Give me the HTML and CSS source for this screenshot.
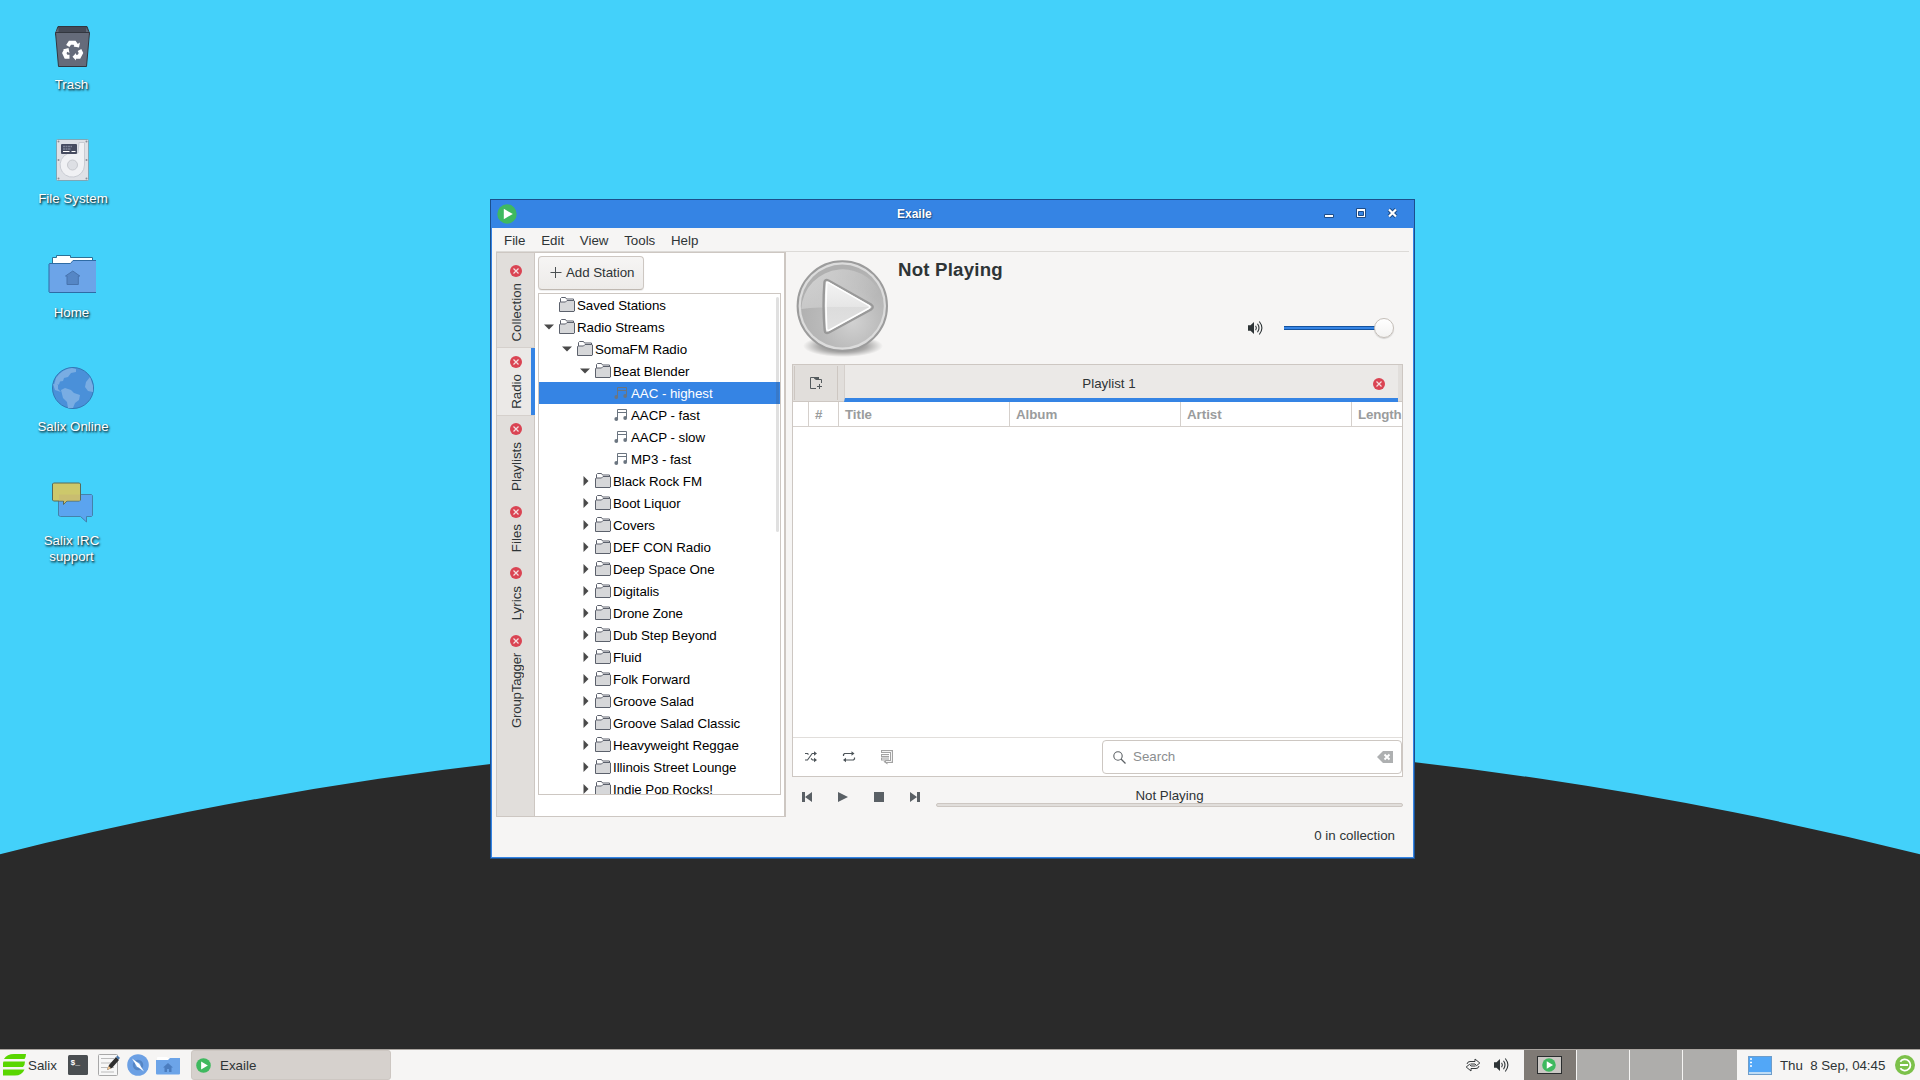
FILE: index.html
```html
<!DOCTYPE html>
<html lang="en">
<head>
<meta charset="utf-8">
<title>Exaile</title>
<link rel="stylesheet" href="styles.css">
</head>
<body>
<svg class="defs" width="0" height="0" aria-hidden="true">
  <symbol id="folder" viewBox="0 0 16 16">
    <path d="M1.500 5.500V1.500l1-1h4l1 1.500h7v4" fill="#fff" stroke="#5c616c"/>
    <path d="M.5 14.500V5.500l.5-.5h5.500l1.500-1.500h7l.5.5v10l-.5.5z" fill="#d6d7d9" stroke="#5c616c"/>
  </symbol>
  <symbol id="note" viewBox="0 0 14 14">
    <path d="M3.500 11V1.500h9V10M3.500 4.500h9" fill="none" stroke="currentColor" stroke-width="1"/>
    <circle cx="2.300" cy="11" r="1.900" fill="currentColor"/><circle cx="11.200" cy="10" r="1.900" fill="currentColor"/>
  </symbol>
  <symbol id="close" viewBox="0 0 12 12">
    <circle cx="6" cy="6" r="6" fill="#da4453"/><path d="M3.500 3.500l5 5M8.500 3.500l-5 5" stroke="#f4dfe1" stroke-width="1.200"/>
  </symbol>
  <symbol id="down" viewBox="0 0 10 6"><path d="M0 .5h10L5 5.500z" fill="#4a4a4a"/></symbol>
  <symbol id="right" viewBox="0 0 6 10"><path d="M.5 0v10L5.500 5z" fill="#4a4a4a"/></symbol>
  <symbol id="exaile" viewBox="0 0 20 20"><circle cx="10" cy="10" r="9.700" fill="#3fb95f"/><path d="M6.800 4.800v10.400L15.800 10z" fill="#fff"/></symbol>
  <symbol id="speaker" viewBox="0 0 16 16">
    <path d="M1 5.200h2.500L7 2v12l-3.500-3.200H1z" fill="#2e3436"/>
    <path d="M8.600 5.700q1.600 2.300 0 4.600M10.500 3.800q3 4.200 0 8.400" fill="none" stroke="#2e3436" stroke-width="1.100"/><path d="M12.300 1.500q5.200 6.500 0 13" fill="none" stroke="#2e3436" stroke-width="1.100" class="wave"/>
  </symbol>
</svg>

<main class="desktop">
  <svg class="wallpaper" viewBox="0 0 1920 1080"><circle cx="960" cy="4696" r="3960" fill="#2a2a2a"/></svg>

  <div class="launcher trash">
    <svg width="48" height="48" viewBox="0 0 48 48">
      <path d="M8 8l2-5.500h29L41 8v3H7.500z" fill="#454a56" stroke="#32363f"/>
      <path d="M7.500 8.500l3-5V8.500zM41 8.500l-3-5v5z" fill="#626876"/>
      <path d="M7.500 8.500h34l-3 34h-28z" fill="#656b7a" stroke="#32363f"/>
      <g fill="none" stroke="#fff" stroke-width="4"><path d="M19.800 22l2.200-3.300h4.500l2 3M31.500 26l1.500 3-2 3.700H27M21.500 32.700h-3.500L16.300 29l1.700-3"/></g>
      <path d="M25.500 22.500l5.500 1 1-5zM28 29v7.500L24.500 32.700zM15 25.500l5.500-1.500 1 5z" fill="#fff"/>
    </svg><span>Trash</span></div>
  <div class="launcher fs">
    <svg width="48" height="48" viewBox="0 0 48 48">
      <rect x="8.500" y="2.500" width="32" height="41" rx="1" fill="#dfe1e6" stroke="#7fa6b5"/>
      <path d="M31 5.500h5.500v22.500a12.200 12.200 0 1 1-17-11.300L30 16z" fill="#f0f1f4" stroke="#c9ccd3"/>
      <circle cx="24.500" cy="28" r="5" fill="#dddfe4" stroke="#c6c8ce"/>
      <rect x="13" y="7" width="16" height="10" rx="1" fill="#474c60"/>
      <path d="M15 9.500h9M15 12h8" stroke="#7f8496" stroke-width="1.500" stroke-dasharray="2 .5"/><path d="M15 14.500h6.500M23.500 14.500h4" stroke="#fff"/>
      <g fill="#8a8d97"><circle cx="10.500" cy="4.500" r="1"/><circle cx="38.500" cy="4.500" r="1"/><circle cx="10.500" cy="23" r="1"/><circle cx="38.500" cy="23" r="1"/><circle cx="10.500" cy="41.500" r="1"/><circle cx="38.500" cy="41.500" r="1"/></g>
    </svg><span>File System</span></div>
  <div class="launcher home">
    <svg width="48" height="48" viewBox="0 0 48 48">
      <path d="M4.500 13V4.500h4v-2h14v2h22V13z" fill="#fff" stroke="#2c7196"/>
      <path d="M1 11l.5-.5h21l2.500-3h23l.5.5v31l-.5.5H1.500L1 39z" fill="#6ca4e8" stroke="#2e6ba5"/>
      <path d="M24.800 18l7 5h-1.500v8.500H19V23h-1.500z" fill="#5586c5" stroke="#4773ad"/>
    </svg><span>Home</span></div>
  <div class="launcher online">
    <svg width="48" height="48" viewBox="0 0 48 48">
      <circle cx="25" cy="23" r="20.500" fill="#4a90d9" stroke="#3476b4"/>
      <g fill="#79ade3"><path d="M8 13Q14 4 24 3l4 1v3l-5 1-3 4-4 1-1 3-3 .5-1 3-5 .5zM5 19l5 1v4l3 3-6-2zM13 25l4-2 6 2 3 3 6 2-1 5-4 3-2 5h-5l-1-6-4-4zM38 17l4-5 3 9v6l-5-1-3-4z"/></g>
    </svg><span>Salix Online</span></div>
  <div class="launcher irc">
    <svg width="48" height="48" viewBox="0 0 48 48">
      <path d="M11.500 14.500h32l1 1v20l-1 1H38.500v5.500l-6-5.500h-20l-2-1v-20z" fill="#5ba4ef" stroke="#4382aa"/>
      <path d="M5.500 3h26l1 1v16l-1 1H19l-3.500 3.500V21H5.500l-1-1V4z" fill="#cdc86b" stroke="#5a6a58"/>
      <path d="M11 14.500h21v6h-13l-3 3v-3h-5z" fill="#c9bd70"/>
    </svg><span>Salix IRC<br>support</span></div>

  <section class="window">
    <header class="titlebar">
      <svg class="app" width="20" height="20"><use href="#exaile"/></svg>
      <b>Exaile</b>
      <svg class="wm" width="76" height="12" viewBox="0 0 76 12">
        <path d="M.5 6.500h9v3h-9z" fill="#fff" stroke="#1d4d89"/>
        <path d="M32.500.5h9v9h-9z" fill="#fff" stroke="#1d4d89"/><path d="M34.500 3.500h5v4h-5z" fill="#3584e4" stroke="#1d4d89"/>
        <path d="M65 1.500l7 7M72 1.500l-7 7" stroke="#1d4d89" stroke-width="4.200"/><path d="M65 1.500l7 7M72 1.500l-7 7" stroke="#fff" stroke-width="2.200"/>
      </svg>
    </header>
    <nav class="menubar"><span>File</span><span>Edit</span><span>View</span><span>Tools</span><span>Help</span></nav>

    <div class="columns">
      <aside class="panels">
        <ul class="sidetabs">
          <li class="t1"><svg width="12" height="12"><use href="#close"/></svg><span>Collection</span></li>
          <li class="t2 active"><svg width="12" height="12"><use href="#close"/></svg><span>Radio</span></li>
          <li class="t3"><svg width="12" height="12"><use href="#close"/></svg><span>Playlists</span></li>
          <li class="t4"><svg width="12" height="12"><use href="#close"/></svg><span>Files</span></li>
          <li class="t5"><svg width="12" height="12"><use href="#close"/></svg><span>Lyrics</span></li>
          <li class="t6"><svg width="12" height="12"><use href="#close"/></svg><span>GroupTagger</span></li>
        </ul>
        <div class="radio">
          <button class="add"><svg width="12" height="12" viewBox="0 0 12 12"><path d="M.5 5.500h11M5.500 0v11" stroke="#4b5052"/></svg>Add Station</button>
          <div class="tree">
            <div class="row l1"><i></i><svg class="f"><use href="#folder"/></svg>Saved Stations</div>
            <div class="row l1"><i><svg width="10" height="6"><use href="#down"/></svg></i><svg class="f"><use href="#folder"/></svg>Radio Streams</div>
            <div class="row l2"><i><svg width="10" height="6"><use href="#down"/></svg></i><svg class="f"><use href="#folder"/></svg>SomaFM Radio</div>
            <div class="row l3"><i><svg width="10" height="6"><use href="#down"/></svg></i><svg class="f"><use href="#folder"/></svg>Beat Blender</div>
            <div class="row l4 selected"><i></i><svg class="n"><use href="#note"/></svg>AAC - highest</div>
            <div class="row l4"><i></i><svg class="n"><use href="#note"/></svg>AACP - fast</div>
            <div class="row l4"><i></i><svg class="n"><use href="#note"/></svg>AACP - slow</div>
            <div class="row l4"><i></i><svg class="n"><use href="#note"/></svg>MP3 - fast</div>
            <div class="row l3"><i><svg width="6" height="10"><use href="#right"/></svg></i><svg class="f"><use href="#folder"/></svg>Black Rock FM</div>
            <div class="row l3"><i><svg width="6" height="10"><use href="#right"/></svg></i><svg class="f"><use href="#folder"/></svg>Boot Liquor</div>
            <div class="row l3"><i><svg width="6" height="10"><use href="#right"/></svg></i><svg class="f"><use href="#folder"/></svg>Covers</div>
            <div class="row l3"><i><svg width="6" height="10"><use href="#right"/></svg></i><svg class="f"><use href="#folder"/></svg>DEF CON Radio</div>
            <div class="row l3"><i><svg width="6" height="10"><use href="#right"/></svg></i><svg class="f"><use href="#folder"/></svg>Deep Space One</div>
            <div class="row l3"><i><svg width="6" height="10"><use href="#right"/></svg></i><svg class="f"><use href="#folder"/></svg>Digitalis</div>
            <div class="row l3"><i><svg width="6" height="10"><use href="#right"/></svg></i><svg class="f"><use href="#folder"/></svg>Drone Zone</div>
            <div class="row l3"><i><svg width="6" height="10"><use href="#right"/></svg></i><svg class="f"><use href="#folder"/></svg>Dub Step Beyond</div>
            <div class="row l3"><i><svg width="6" height="10"><use href="#right"/></svg></i><svg class="f"><use href="#folder"/></svg>Fluid</div>
            <div class="row l3"><i><svg width="6" height="10"><use href="#right"/></svg></i><svg class="f"><use href="#folder"/></svg>Folk Forward</div>
            <div class="row l3"><i><svg width="6" height="10"><use href="#right"/></svg></i><svg class="f"><use href="#folder"/></svg>Groove Salad</div>
            <div class="row l3"><i><svg width="6" height="10"><use href="#right"/></svg></i><svg class="f"><use href="#folder"/></svg>Groove Salad Classic</div>
            <div class="row l3"><i><svg width="6" height="10"><use href="#right"/></svg></i><svg class="f"><use href="#folder"/></svg>Heavyweight Reggae</div>
            <div class="row l3"><i><svg width="6" height="10"><use href="#right"/></svg></i><svg class="f"><use href="#folder"/></svg>Illinois Street Lounge</div>
            <div class="row l3"><i><svg width="6" height="10"><use href="#right"/></svg></i><svg class="f"><use href="#folder"/></svg>Indie Pop Rocks!</div>
            <div class="scrollbar"></div>
          </div>
        </div>
      </aside>

      <div class="player">
        <div class="info">
          <svg class="cover" width="96" height="100" viewBox="0 0 96 100">
            <defs>
              <radialGradient id="disc" cx=".62" cy=".68" r=".65"><stop offset="0" stop-color="#d2d2d2"/><stop offset=".6" stop-color="#b9b9b9"/><stop offset="1" stop-color="#b0b0b0"/></radialGradient>
              <linearGradient id="gloss" x1="0" y1="0" x2="1" y2=".5"><stop offset="0" stop-color="#fff" stop-opacity=".5"/><stop offset="1" stop-color="#fff" stop-opacity="0"/></linearGradient>
              <radialGradient id="shade"><stop offset="0" stop-color="#000" stop-opacity=".55"/><stop offset=".6" stop-color="#000" stop-opacity=".3"/><stop offset="1" stop-color="#000" stop-opacity="0"/></radialGradient>
              <linearGradient id="tri" x1="0" y1="0" x2="0" y2="1"><stop offset="0" stop-color="#f4f4f4"/><stop offset=".5" stop-color="#e6e6e6"/><stop offset=".52" stop-color="#dcdcdc"/><stop offset="1" stop-color="#e2e2e2"/></linearGradient>
            </defs>
            <ellipse cx="49" cy="86" rx="40" ry="11" fill="url(#shade)"/>
            <circle cx="48.300" cy="46" r="44.700" fill="#dcdcdc" stroke="#9c9c9c" stroke-width="2"/>
            <circle cx="48.300" cy="46" r="41.500" fill="url(#disc)"/>
            <path d="M7.300 49a41.500 41.500 0 0 1 82-7Q68 50 40 48 20 46.500 7.300 49z" fill="url(#gloss)"/>
            <path d="M30.500 22Q31 19 34.500 20.500L77 44.500q3.500 2.500 0 5L35 72.500q-4 1.500-4.300-2Q28.500 46 30.500 22z" fill="url(#tri)" stroke="#999" stroke-width="2.400"/>
            <path d="M32.700 24q0-2.500 2.500-1.200L74.500 45.300q2.400 1.600 0 3.200L35.500 70q-2.600 1-2.800-1.500-1.400-22 0-44.500z" fill="none" stroke="#fff" stroke-width="1.500"/>
          </svg>
          <h1>Not Playing</h1>
          <div class="volume">
            <svg width="16" height="16" viewBox="0 0 16 16"><use href="#speaker"/></svg>
            <div class="slider"><span></span></div>
          </div>
        </div>

        <div class="playlist">
          <div class="tabs">
            <div class="newtab"><svg width="14" height="14" viewBox="0 0 14 14"><path d="M7 12.500H1.500V1.500H5M12.500 7V3.500H10" fill="none" stroke="#555b5e"/><path d="M5 1h5v3H7L5 2.500z" fill="#555b5e"/><path d="M10.500 8v5M8 10.500h5" stroke="#555b5e"/></svg></div>
            <div class="tab"><span>Playlist 1</span><svg width="12" height="12"><use href="#close"/></svg></div>
          </div>
          <div class="thead"><span></span><span>#</span><span>Title</span><span>Album</span><span>Artist</span><span>Length</span></div>
          <div class="empty"></div>
          <div class="tools">
            <svg width="14" height="12" viewBox="0 0 14 12"><g fill="none" stroke="#4d5459" stroke-width="1.100"><path d="M1 2.500h2.500L4.500 3.500M7 7.500l1.500 1.500h3M1 9h2.500l4.700-6.500h3"/></g><path d="M10 .3l3 2.200-3 2.200zM10 6.800l3 2.200-3 2.200z" fill="#4d5459"/></svg>
            <svg width="14" height="12" viewBox="0 0 14 12"><path d="M1.500 5V3.500L2.500 2.500h8M12.500 6.500V8l-1 1h-8" fill="none" stroke="#4d5459" stroke-width="1.200"/><path d="M9.500.2l3 2.300-3 2.300zM4 6.700L1 9l3 2.300z" fill="#4d5459"/></svg>
            <svg class="dyn" width="14" height="16" viewBox="0 0 14 16"><g fill="none"><path d="M1 2.500h10.500v10H6M1 6.500h8M1 10h8" stroke="#a3a3a3" stroke-width="3"/><path d="M7.500 9.800L3.500 12.700l4 2.800z" fill="#a3a3a3"/><path d="M2 2.500h9.500v10H6M2 6.500h7M2 10h7" stroke="#f3f3f3"/></g></svg>
            <div class="search">
              <svg width="13" height="13" viewBox="0 0 13 13"><circle cx="5" cy="5" r="4.200" fill="none" stroke="#5c6165" stroke-width="1.100"/><path d="M8 8l4.500 4.500" stroke="#5c6165" stroke-width="1.300"/></svg>
              <span>Search</span>
              <svg width="16" height="12" viewBox="0 0 16 12"><path d="M0 6l6-6h10v12H6z" fill="#aeb0b1"/><path d="M7.500 3.500l5 5M12.500 3.500l-5 5" stroke="#fff" stroke-width="1.900"/></svg>
            </div>
          </div>
        </div>

        <div class="transport">
          <svg width="10" height="10" viewBox="0 0 10 10"><path d="M0 0h3v10H0zM10 0v10L3 5z" fill="#5a6065"/></svg>
          <svg width="10" height="10" viewBox="0 0 10 10"><path d="M0 0v10L10 5z" fill="#5a6065"/></svg>
          <svg width="10" height="10" viewBox="0 0 10 10"><path d="M0 0h10v10H0z" fill="#5a6065"/></svg>
          <svg width="10" height="10" viewBox="0 0 10 10"><path d="M7 0h3v10H7zM0 0v10L7 5z" fill="#5a6065"/></svg>
          <div class="progress"><span>Not Playing</span><div class="trough"></div></div>
        </div>
      </div>
    </div>
    <footer class="status">0 in collection</footer>
  </section>

  <footer class="taskbar">
    <svg class="logo" width="23" height="24" viewBox="0 0 23 24"><path d="M1 6Q4 1 11 1h12q0 3-1.500 5zM.5 8.500h21.500q0 3.500-2 5.500H0q-.5-3.500.5-5.500zM0 16.500h21.500Q19 22.500 12 22.500H0z" fill="#59d600"/></svg>
    <span class="brand">Salix</span>
    <svg class="term" width="20" height="20" viewBox="0 0 20 20"><rect width="20" height="20" rx="1.500" fill="#4a4e51"/><text x="2.500" y="9.500">$_</text></svg>
    <svg class="edit" width="22" height="22" viewBox="0 0 22 22"><rect x=".5" y=".5" width="19" height="21" rx="1" fill="#f7f7f7" stroke="#a8a8a8"/><path d="M3 4.500h13M3 9h13M3 13.500h13M3 18h13" stroke="#bbb"/><path d="M9 16l2-5 7-8 3 3-7 8z" fill="#2e2e2e"/><path d="M9 16l1.500-4 2.500 2.300z" fill="#efc28c"/><path d="M18 3l1.500-1.500L22 4l-1.500 1.500z" fill="#4a78ac"/></svg>
    <svg class="web" width="22" height="22" viewBox="0 0 22 22"><circle cx="11" cy="11" r="10.800" fill="#6ca0e4"/><circle cx="11" cy="11" r="4" fill="none" stroke="#5585c4" stroke-width="2.500"/><path d="M5 4.500l7.200 5.300L17 17.500l-7.200-5.300z" fill="#fff"/></svg>
    <svg class="files" width="24" height="19" viewBox="0 0 24 19"><path d="M1 5V1.500L2 1h9l1 1h11v4z" fill="#fff"/><path d="M0 4h12l2-2h10v15.500q0 1-1 1H1q-1 0-1-1z" fill="#6ca4e8"/><path d="M12 7l5 4.500h-1.500V16h-2.500v-3h-2v3H8.500v-4.500H7z" fill="#4b7dbf"/></svg>
    <div class="task"><svg width="15" height="15"><use href="#exaile"/></svg><span>Exaile</span></div>
    <svg class="net" width="16" height="14" viewBox="0 0 16 14"><path d="M2 6q.5-2.500 3-2.500h5V1l4.800 4-3.300 2.700-1.500-1.700H5.500M14 8q-.5 2.500-3 2.500H6V13L1.200 9l3.300-2.700L6 8h4.500" fill="none" stroke="#363b3d" stroke-width="1"/></svg>
    <svg class="vol" width="16" height="16" viewBox="0 0 16 16"><use href="#speaker"/></svg>
    <div class="pager"><i class="on"><svg width="25" height="18" viewBox="0 0 25 18"><rect x=".5" y=".5" width="24" height="17" fill="#cbc8c4" stroke="#2a2d2e"/><use href="#exaile" x="5" y="2" width="14" height="14"/></svg></i><i></i><i></i><i></i></div>
    <svg class="show" width="24" height="19" viewBox="0 0 24 19"><rect x=".5" y=".5" width="23" height="18" fill="#52a7f7" stroke="#6e9dca"/><path d="M1 16h22v2H1z" fill="#bfdcf5"/><path d="M2 3h2M2 6.500h2M2 10h2" stroke="#fff" stroke-width="1.600"/></svg>
    <span class="clock">Thu &nbsp;8 Sep, 04:45</span>
    <svg class="exit" width="20" height="20" viewBox="0 0 20 20"><circle cx="10" cy="10" r="10" fill="#7cc14a"/><path d="M5.300 6.700a5.600 5.600 0 1 1 0 6.600M5 10h8" fill="none" stroke="#fff" stroke-width="1.800"/></svg>
  </footer>
</main>
</body>
</html>
```
FILE: styles.css
```css
* { box-sizing: border-box; }
body { margin: 0; font: 13.333px/16px "Liberation Sans", Arial, sans-serif; color: #2e3436; overflow: hidden; }
svg { display: block; flex: none; }
ul { list-style: none; margin: 0; padding: 0; }
.defs { position: absolute; }
.desktop { position: relative; width: 1920px; height: 1080px; background: #43d1fa; overflow: hidden; }
.wallpaper { position: absolute; inset: 0; width: 1920px; height: 1080px; }

.launcher { position: absolute; left: 12px; width: 120px; display: flex; flex-direction: column; align-items: center; gap: 5px; color: #fff; text-align: center; text-shadow: 1px 1px 2px rgba(0,0,0,.85), 1px 2px 2px rgba(0,0,0,.35); }
.launcher span { margin-left: 2px; }
.launcher svg { margin-right: 1px; }
.trash { top: 24px; }
.trash span, .home span, .irc span { margin-left: -1px; }
.fs { top: 137px; gap: 6px; }
.home { top: 253px; gap: 4px; }
.online { top: 365px; gap: 6px; }
.irc { top: 480px; gap: 5px; }

.window { position: absolute; left: 490px; top: 199px; width: 925px; height: 660px; border: 1px solid #1b4f8c; display: flex; flex-direction: column; background: #f6f5f4; box-shadow: inset 0 0 0 1px #3584e4; padding: 0 1px 1px; }
.titlebar { height: 28px; margin: 0 -1px; background: #3584e4; display: flex; align-items: center; padding: 0 14px 0 6px; color: #fff; flex: none; }
.titlebar b { font-size: 12px; text-shadow: 0 0 1px #1d4d89, 1px 1px 1px #1d4d89; margin-left: 380px; }
.wm { margin-left: auto; }
.menubar { height: 24px; margin: 0 4px; padding: 5px 0 0 8px; border-bottom: 1px solid #dcdad7; display: flex; gap: 15.700px; flex: none; }

.columns { display: flex; flex: none; height: 565px; padding: 0 10px 0 4px; }
.panels { width: 290px; border: 1px solid #cdc7c2; border-right-width: 2px; background: #fff; display: flex; }
.sidetabs { width: 38px; background: #e1dedb; border-right: 1px solid #cdc7c2; }
.sidetabs li { width: 38px; display: flex; flex-direction: column; align-items: center; gap: 6px; padding-top: 12px; }
.sidetabs span { writing-mode: vertical-rl; transform: rotate(180deg); white-space: nowrap; margin-left: 1px; }
.t1 { height: 95px; }
.t2 { height: 67px; }
.t3 { height: 83px; }
.t4 { height: 61px; }
.t5 { height: 68px; }
.t6 span { letter-spacing: -.25px; }
.sidetabs .t2 { background: #ebe9e7; box-shadow: inset -4px 0 #3584e4, 0 -1px #d5d0cc, 0 1px #d5d0cc; padding-top: 8px; }
.sidetabs .t3, .sidetabs .t4, .sidetabs .t5, .sidetabs .t6 { padding-top: 8px; }
.sidetabs .t3, .sidetabs .t5 { gap: 7px; }

.radio { flex: 1; padding: 3px 3px 0; }
.add { width: 106px; height: 34px; border: 1px solid #cdc7c2; border-bottom-color: #bfb8b1; border-radius: 4px; background: linear-gradient(#f6f5f4, #edebe9); display: flex; align-items: center; gap: 4px; padding: 0 0 1px 11px; font: inherit; letter-spacing: -.05px; color: inherit; box-shadow: 0 1px 1px rgba(0,0,0,.08); white-space: nowrap; }
.tree { position: relative; width: 243px; height: 502px; margin-top: 3px; border: 1px solid #cdc7c2; overflow: hidden; color: #000; letter-spacing: -.05px; }
.row { height: 22px; padding-top: 2px; display: flex; align-items: center; white-space: nowrap; }
.row i { width: 20px; display: flex; justify-content: center; margin-bottom: 2px; }
.row i svg[width="6"] { margin-left: 1px; }
.row .f { width: 16px; height: 16px; margin: 0 2px 2px 0; }
.row .n { width: 14px; height: 14px; margin: 0 3px 2px 1px; color: #6b7580; }
.row.l1 { padding-left: 0; }
.row.l2 { padding-left: 18px; }
.row.l3 { padding-left: 36px; }
.row.l4 { padding-left: 54px; }
.row.selected { background: #3584e4; color: #fff; }
.scrollbar { position: absolute; right: 1px; top: 3px; width: 3px; height: 235px; border-radius: 2px; background: rgba(70,70,70,.17); }

.player { flex: 1; padding-left: 6px; display: flex; flex-direction: column; }
.info { height: 112px; display: grid; grid-template-columns: 106px 1fr; grid-template-rows: 48px 1fr; }
.cover { grid-row: 1 / 3; margin: 8px 0 0 2px; }
h1 { margin: 7px 0 0; font-size: 18.667px; line-height: 22px; letter-spacing: .2px; }
.volume { display: flex; align-items: flex-start; justify-content: flex-end; padding: 20px 9px 0 0; gap: 21px; }
.slider { width: 110px; height: 20px; display: flex; align-items: center; background: linear-gradient(#15539e 0 1px, #3584e4 1px 3px, #15539e 3px) 0 8px / 95px 4px no-repeat; margin-top: -2px; }
.slider span { width: 20px; height: 20px; margin-left: 90px; border: 1px solid #c4beb8; border-radius: 50%; background: linear-gradient(#fff, #f3f2f1); box-shadow: 0 1px 1px rgba(0,0,0,.15); }

.playlist { height: 413px; border: 1px solid #cdc7c2; background: #fff; display: flex; flex-direction: column; }
.tabs { height: 37px; background: #e1dedb; border-bottom: 1px solid #cdc7c2; display: flex; padding: 0 4px 0 1px; }
.newtab { width: 44px; margin: 1px 7px 1px 0; border: 1px solid #cdc7c2; border-width: 0 1px; display: flex; align-items: center; justify-content: center; }
.tab { flex: 1; height: 37px; margin-left: -1px; background: #ebe9e7; border-left: 1px solid #d5d0cc; border-bottom: 4px solid #3584e4; display: flex; align-items: center; padding: 4px 13px 0 0; }
.tab span { flex: 1; text-align: center; }
.thead { height: 25px; display: grid; grid-template-columns: 16px 30px 171px 171px 171px 1fr; border-bottom: 1px solid #d5d0cc; color: #9a9c9d; font-weight: bold; line-height: 25px; overflow: hidden; }
.thead span { height: 24px; border-right: 1px solid #d5d0cc; padding-left: 6px; overflow: hidden; letter-spacing: -.04px; }
.thead span:last-child { border: 0; letter-spacing: -.15px; }
.empty { flex: 1; }
.tools { height: 39px; border-top: 1px solid #e1dedb; display: flex; align-items: center; padding: 0 0 0 11px; gap: 24px; }
.search { width: 300px; height: 34px; margin-left: auto; border: 1px solid #cdc7c2; border-radius: 4px; display: flex; align-items: center; padding: 0 8px 0 10px; color: #8b8e8f; }
.search span { flex: 1; padding-left: 7px; }
.transport { display: flex; gap: 26px; padding: 15px 0 0 10px; }
.progress { width: 467px; margin: -4px 0 0 -10px; text-align: center; }
.trough { height: 4px; margin-top: -1px; border: 1px solid #cdc7c2; border-radius: 2px; background: #e1dedb; }
.status { text-align: right; padding: 11px 18px 0 0; }

.taskbar { position: absolute; left: 0; bottom: 0; width: 1920px; height: 31px; border-top: 1px solid #a9a49f; background: #f6f5f4; display: flex; align-items: center; padding-left: 3px; }
.brand { margin: 0 11px 0 2px; width: 29px; padding-top: 2px; }
.term text { font: bold 8px "Liberation Mono", monospace; fill: #fff; }
.edit { margin-left: 10px; }
.web { margin-left: 7px; }
.files { margin-left: 7px; }
.task { width: 200px; height: 30px; margin-left: 11px; border: 1px solid #cdc7c2; border-radius: 3px; background: #d6d1cd; display: flex; align-items: center; padding-left: 4px; gap: 9px; }
.task span { padding-top: 2px; }
.net { margin-left: auto; }
.vol { margin: 0 15px 0 12px; }
.vol .wave { opacity: .4; }
.pager { display: flex; gap: 1px; height: 30px; }
.pager i { width: 52px; background: #aeadab; display: flex; align-items: center; justify-content: center; }
.pager .on svg { margin-right: 2px; }
.pager i:last-child { width: 54px; }
.pager .on { background: #7f7a75; }
.show { margin-left: 11px; }
.clock { margin-left: 8px; width: 106px; padding-top: 2px; letter-spacing: -.04px; white-space: nowrap; }
.exit { margin: 0 5px 0 9px; }
```
